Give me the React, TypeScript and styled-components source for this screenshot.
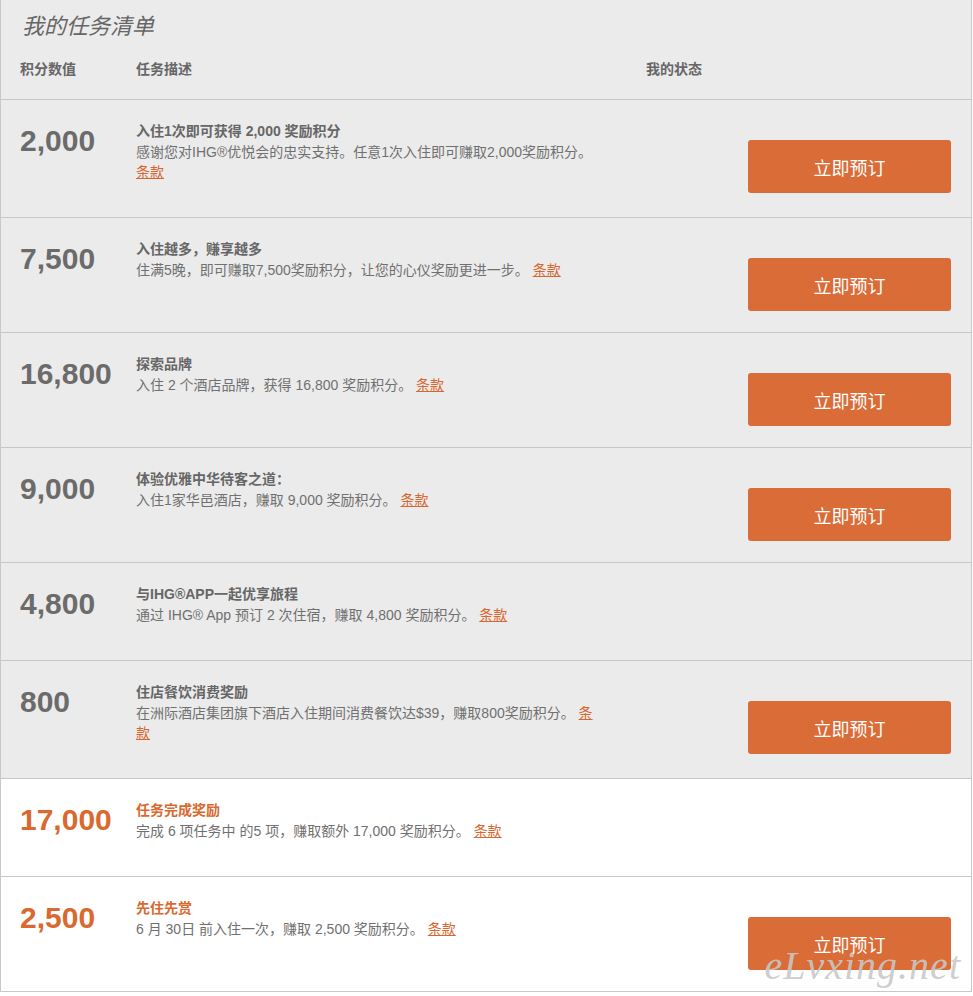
import React from "react";
import styled, { createGlobalStyle } from "styled-components";

const Global = createGlobalStyle`
  html, body { margin: 0; padding: 0; background: #ffffff; }
  body { font-family: "Liberation Sans", "Noto Sans CJK SC", sans-serif; }
`;

const Panel = styled.div`
  width: 972px;
  box-sizing: border-box;
  border-left: 1px solid #c8c8c8;
  border-right: 1px solid #c8c8c8;
  border-bottom: 1px solid #c8c8c8;
`;

const Header = styled.div`
  background: #ebebeb;
  padding: 12px 19px 20px 19px;
`;

const Title = styled.h2`
  margin: 0 0 17px 2px;
  font-size: 22px;
  line-height: 30px;
  font-weight: normal;
  font-style: italic;
  color: #666;
`;

const HeadRow = styled.div`
  display: grid;
  grid-template-columns: 116px 510px 1fr;
`;

const HeadCell = styled.div`
  font-size: 14px;
  line-height: 20px;
  font-weight: bold;
  color: #666;
`;

const Row = styled.div<{ $white?: boolean }>`
  display: grid;
  grid-template-columns: 116px 466px 1fr;
  align-items: start;
  border-top: 1px solid #c8c8c8;
  background: ${(p) => (p.$white ? "#ffffff" : "#ebebeb")};
  padding: 21px 20px 21px 19px;
  position: relative;
`;

const Points = styled.div<{ $accent?: boolean }>`
  font-family: "Liberation Sans", Arial, sans-serif;
  font-size: 30px;
  line-height: 40px;
  font-weight: bold;
  color: ${(p) => (p.$accent ? "#d9692f" : "#6b6b6b")};
`;

const Desc = styled.div`
  padding-bottom: 14px;
`;

const TaskTitle = styled.div<{ $accent?: boolean }>`
  font-size: 14px;
  line-height: 21px;
  font-weight: bold;
  color: ${(p) => (p.$accent ? "#d9692f" : "#666")};
`;

const TaskText = styled.p`
  margin: 0;
  font-size: 14px;
  line-height: 20px;
  color: #707070;
`;

const Terms = styled.a`
  color: #d9652f;
  text-decoration: underline;
  cursor: pointer;
`;

const Status = styled.div`
  display: flex;
  justify-content: flex-end;
`;

const BookButton = styled.button`
  margin-top: 19px;
  width: 203px;
  height: 53px;
  border: none;
  border-radius: 3px;
  background: #da6c37;
  color: #ffffff;
  font-family: "Liberation Sans", "Noto Sans CJK SC", sans-serif;
  font-size: 18px;
  cursor: pointer;
`;

const Watermark = styled.div`
  position: absolute;
  right: 10px;
  bottom: 2px;
  font-family: "Liberation Serif", serif;
  font-style: italic;
  font-size: 40px;
  letter-spacing: 1px;
  color: rgba(200, 200, 200, 0.9);
  pointer-events: none;
  white-space: nowrap;
`;

type Task = {
  points: string;
  title: string;
  text: string;
  button: boolean;
  accent?: boolean;
};

const tasks: Task[] = [
  {
    points: "2,000",
    title: "入住1次即可获得 2,000 奖励积分",
    text: "感谢您对IHG®优悦会的忠实支持。任意1次入住即可赚取2,000奖励积分。",
    button: true,
  },
  {
    points: "7,500",
    title: "入住越多，赚享越多",
    text: "住满5晚，即可赚取7,500奖励积分，让您的心仪奖励更进一步。",
    button: true,
  },
  {
    points: "16,800",
    title: "探索品牌",
    text: "入住 2 个酒店品牌，获得 16,800 奖励积分。",
    button: true,
  },
  {
    points: "9,000",
    title: "体验优雅中华待客之道：",
    text: "入住1家华邑酒店，赚取 9,000 奖励积分。",
    button: true,
  },
  {
    points: "4,800",
    title: "与IHG®APP一起优享旅程",
    text: "通过 IHG® App 预订 2 次住宿，赚取 4,800 奖励积分。",
    button: false,
  },
  {
    points: "800",
    title: "住店餐饮消费奖励",
    text: "在洲际酒店集团旗下酒店入住期间消费餐饮达$39，赚取800奖励积分。",
    button: true,
  },
  {
    points: "17,000",
    title: "任务完成奖励",
    text: "完成 6 项任务中 的5 项，赚取额外 17,000 奖励积分。",
    button: false,
    accent: true,
  },
  {
    points: "2,500",
    title: "先住先赏",
    text: "6 月 30日 前入住一次，赚取 2,500 奖励积分。",
    button: true,
    accent: true,
  },
];

export default function App() {
  return (
    <>
      <Global />
      <Panel>
        <Header>
          <Title>我的任务清单</Title>
          <HeadRow>
            <HeadCell>积分数值</HeadCell>
            <HeadCell>任务描述</HeadCell>
            <HeadCell>我的状态</HeadCell>
          </HeadRow>
        </Header>
        {tasks.map((t, i) => (
          <Row key={i} $white={t.accent}>
            <Points $accent={t.accent}>{t.points}</Points>
            <Desc>
              <TaskTitle $accent={t.accent}>{t.title}</TaskTitle>
              <TaskText>
                {t.text} <Terms>条款</Terms>
              </TaskText>
            </Desc>
            <Status>{t.button && <BookButton>立即预订</BookButton>}</Status>
            {i === tasks.length - 1 && <Watermark>eLvxing.net</Watermark>}
          </Row>
        ))}
      </Panel>
    </>
  );
}
